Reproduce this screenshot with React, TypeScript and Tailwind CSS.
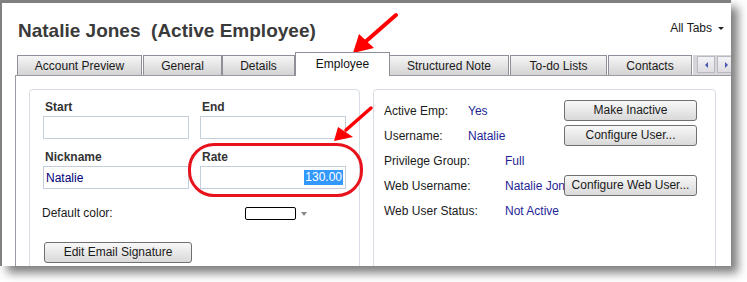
import React from 'react'

const TABS = [
  { label: 'Account Preview', w: 'w-[125px]', ml: 'ml-0' },
  { label: 'General', w: 'w-[79px]', ml: 'ml-[1px]' },
  { label: 'Details', w: 'w-[73px]', ml: 'ml-0' },
  { label: 'Employee', w: 'w-[95px]', ml: 'ml-0', active: true },
  { label: 'Structured Note', w: 'w-[120px]', ml: '-ml-px' },
  { label: 'To-do Lists', w: 'w-[97px]', ml: 'ml-[1px]' },
  { label: 'Contacts', w: 'w-[84px]', ml: 'ml-[1px]' },
]

function Btn({ children, className = '' }: { children: React.ReactNode; className?: string }) {
  return (
    <button
      className={`h-[21px] rounded-[3px] border border-[#707070] bg-gradient-to-b from-[#f8f8f8] to-[#d9d9d9] text-[12px] leading-[19px] text-[#1a1a1a] whitespace-nowrap ${className}`}
    >
      {children}
    </button>
  )
}

function Field({ label, value, selected, className = '' }: { label: string; value?: string; selected?: boolean; className?: string }) {
  return (
    <div className={className}>
      <div className="h-[16px] pl-[2px] text-[12px] font-bold leading-[16px] text-[#333]">{label}</div>
      <div className={`mt-[1px] flex h-[23px] items-center border border-[#c5cfdc] bg-white px-[2px] text-[12px] text-[#00007a] ${selected ? 'justify-end' : ''}`}>
        {selected ? <span className="bg-[#3399ff] px-[1px] leading-[15px] text-white">{value}</span> : value}
      </div>
    </div>
  )
}

function InfoRow({ label, labelW, value, button }: { label: string; labelW: string; value: string; button?: string }) {
  return (
    <div className="flex h-[25px] items-center text-[12px]">
      <span className={`${labelW} shrink-0 text-[#1a1a1a]`}>{label}</span>
      <span className="min-w-0 flex-1 overflow-hidden whitespace-nowrap text-[#1f1f96]">{value}</span>
      {button ? <Btn className="w-[133px] shrink-0">{button}</Btn> : null}
    </div>
  )
}

export default function App() {
  return (
    <div className="relative h-[282px] w-[747px] overflow-hidden bg-white" style={{ fontFamily: '"Liberation Sans", Arial, sans-serif' }}>
      <div className="flex h-[266px] w-[731px] flex-col overflow-hidden border-l-2 border-t-[3px] border-[#808080] bg-white shadow-[7px_7px_9px_rgba(0,0,0,0.5)]">
        {/* header */}
        <div className="flex h-[49px] shrink-0 items-start justify-between pl-[16px] pr-[7px]">
          <h1 className="mt-[17px] whitespace-pre text-[19px] font-bold leading-[22px] text-[#3a3a3a]">Natalie Jones  (Active Employee)</h1>
          <div className="mt-[18px] flex items-center gap-[6px] text-[12px] leading-[14px] text-[#1a1a1a]">
            All Tabs
            <span className="h-0 w-0 border-x-[3px] border-t-[3px] border-x-transparent border-t-[#222]" />
          </div>
        </div>

        {/* tabs */}
        <div className="flex h-[23px] shrink-0 items-end pl-[15px]">
          {TABS.map((t) =>
            t.active ? (
              <div
                key={t.label}
                className={`relative z-10 -mb-px flex h-[24px] ${t.w} ${t.ml} shrink-0 items-center justify-center border border-b-0 border-[#8f8f99] bg-white pb-[2px] text-[12px] text-[#111]`}
              >
                {t.label}
              </div>
            ) : (
              <div
                key={t.label}
                className={`flex h-[20px] ${t.w} ${t.ml} shrink-0 items-center justify-center border border-b-0 border-[#8f8f99] bg-gradient-to-b from-[#f6f6f6] to-[#d3d3d3] text-[12px] text-[#1a1a1a]`}
              >
                {t.label}
              </div>
            ),
          )}
          <div className="ml-[1px] flex h-[20px] shrink-0 items-start gap-[2px] bg-[#d6d6da] pl-[4px] pt-[1px]">
            <div className="flex h-[17px] w-[18px] items-center justify-center border border-[#b9b9c2] bg-gradient-to-b from-[#f4f4f6] to-[#dcdce2]">
              <span className="h-0 w-0 border-y-[3px] border-r-[3px] border-y-transparent border-r-[#4858b0]" />
            </div>
            <div className="flex h-[17px] w-[18px] items-center justify-center border border-[#b9b9c2] bg-gradient-to-b from-[#f4f4f6] to-[#dcdce2]">
              <span className="h-0 w-0 border-y-[3px] border-l-[3px] border-y-transparent border-l-[#4858b0]" />
            </div>
          </div>
        </div>

        {/* panel */}
        <div className="ml-[13px] flex flex-1 gap-[13px] border-l border-t border-[#9a9aa4] pl-[13px] pt-[13px]">
          {/* left box */}
          <div className="h-[200px] w-[331px] shrink-0 rounded-[4px] border border-[#d8dde5] pl-[13px] pt-[9px]">
            <div className="grid w-[303px] grid-cols-[146px_146px] gap-x-[11px]">
              <Field label="Start" />
              <Field label="End" />
              <Field label="Nickname" value="Natalie" className="mt-[10px]" />
              <Field label="Rate" value="130.00" selected className="mt-[10px]" />
            </div>
            <div className="-ml-px mt-[18px] flex h-[13px] items-center text-[12px] leading-[13px] text-[#1a1a1a]">
              <span className="w-[203px] shrink-0">Default color:</span>
              <span className="h-[13px] w-[51px] rounded-[2px] border border-black bg-white" />
              <span className="ml-[5px] h-0 w-0 border-x-[3px] border-t-[4px] border-x-transparent border-t-[#8a8a8a]" />
            </div>
            <Btn className="ml-px mt-[22px] w-[148px]">Edit Email Signature</Btn>
          </div>

          {/* right box */}
          <div className="h-[200px] w-[343px] shrink-0 rounded-[4px] border border-[#d8dde5] pl-[10px] pr-[18px] pt-[8px]">
            <InfoRow label="Active Emp:" labelW="w-[84px]" value="Yes" button="Make Inactive" />
            <InfoRow label="Username:" labelW="w-[84px]" value="Natalie" button="Configure User..." />
            <InfoRow label="Privilege Group:" labelW="w-[121px]" value="Full" />
            <InfoRow label="Web Username:" labelW="w-[121px]" value="Natalie Jones" button="Configure Web User..." />
            <InfoRow label="Web User Status:" labelW="w-[121px]" value="Not Active" />
          </div>
        </div>
      </div>

      {/* red annotations */}
      <div className="absolute left-[188px] top-[143px] h-[54px] w-[175px] rounded-[26px] border-[3px] border-[#e8121c]" />
      <svg className="absolute left-0 top-0" width="747" height="282" viewBox="0 0 747 282">
        <line x1="396" y1="15" x2="364" y2="43" stroke="#ff0000" strokeWidth="4" strokeLinecap="round" />
        <polygon points="353,53 359,34 374,48" fill="#ff0000" />
        <line x1="371" y1="108" x2="346" y2="130" stroke="#ff0000" strokeWidth="3.5" strokeLinecap="round" />
        <polygon points="334,141 338,127 353,137" fill="#ff0000" />
      </svg>
    </div>
  )
}
